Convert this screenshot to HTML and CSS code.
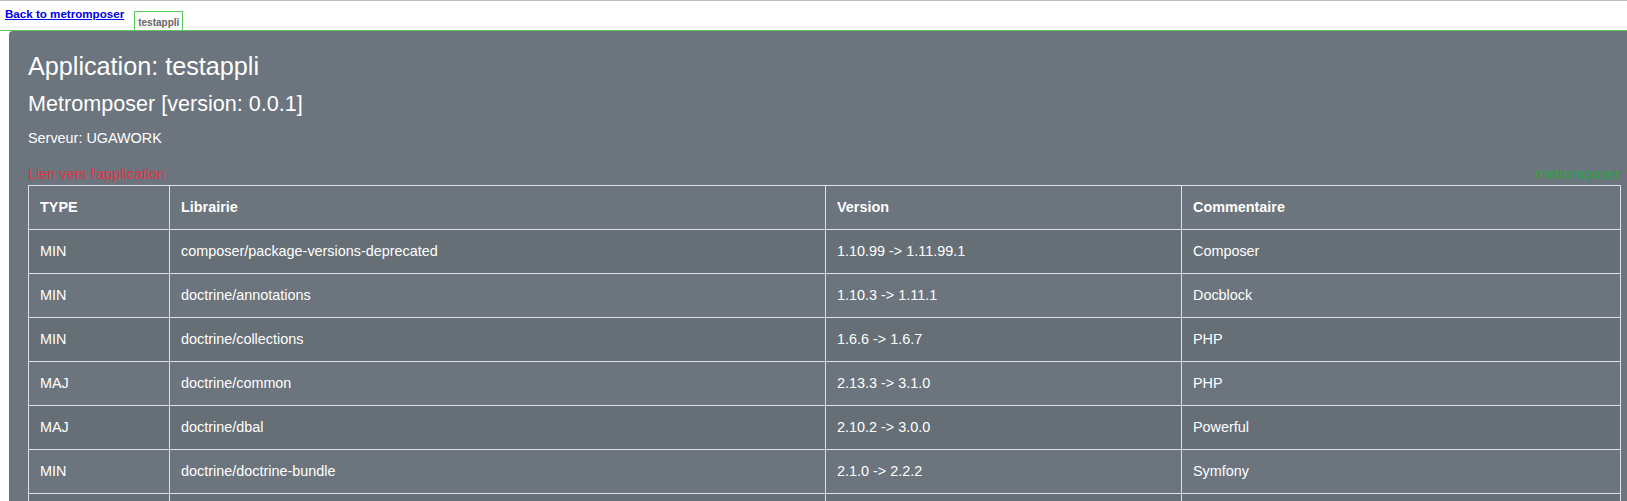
FILE: index.html
```html
<!DOCTYPE html>
<html lang="fr">
<head>
<meta charset="utf-8">
<title>testappli</title>
<link rel="stylesheet" href="styles.css">
</head>
<body>
<div class="topbar">
  <a class="back" href="#">Back to metromposer</a>
  <span class="tab">testappli</span>
</div>
<div class="panel">
  <h3 class="title">Application: testappli</h3>
  <h4 class="subtitle">Metromposer [version: 0.0.1]</h4>
  <p class="server">Serveur: UGAWORK</p>
  <div class="links">
    <a class="applink" href="#">Lien vers l'application</a>
    <a class="metrolink" href="#">metromposer</a>
  </div>
  <table class="libs">
    <colgroup>
      <col class="c1"><col class="c2"><col class="c3"><col class="c4">
    </colgroup>
    <thead>
      <tr><th>TYPE</th><th>Librairie</th><th>Version</th><th>Commentaire</th></tr>
    </thead>
    <tbody>
      <tr><td>MIN</td><td>composer/package-versions-deprecated</td><td>1.10.99 -&gt; 1.11.99.1</td><td>Composer</td></tr>
      <tr><td>MIN</td><td>doctrine/annotations</td><td>1.10.3 -&gt; 1.11.1</td><td>Docblock</td></tr>
      <tr><td>MIN</td><td>doctrine/collections</td><td>1.6.6 -&gt; 1.6.7</td><td>PHP</td></tr>
      <tr><td>MAJ</td><td>doctrine/common</td><td>2.13.3 -&gt; 3.1.0</td><td>PHP</td></tr>
      <tr><td>MAJ</td><td>doctrine/dbal</td><td>2.10.2 -&gt; 3.0.0</td><td>Powerful</td></tr>
      <tr><td>MIN</td><td>doctrine/doctrine-bundle</td><td>2.1.0 -&gt; 2.2.2</td><td>Symfony</td></tr>
      <tr><td>MIN</td><td>doctrine/doctrine-migrations-bundle</td><td>3.0.1 -&gt; 3.0.2</td><td>Symfony</td></tr>
    </tbody>
  </table>
</div>
</body>
</html>
```

FILE: styles.css
```css
html, body {
  margin: 0;
  padding: 0;
  background: #ffffff;
}

body {
  font-family: "Liberation Sans", Arial, sans-serif;
  font-size: 14.4px;
  line-height: 1.5;
  color: #212529;
  overflow: hidden;
}

.topbar {
  display: flex;
  align-items: flex-end;
  gap: 10px;
  height: 29px;
  padding-left: 5px;
  border-top: 1px solid #bdbdbd;
  border-bottom: 1px solid #5cc95c;
}

.back {
  align-self: flex-start;
  margin-top: 6px;
  font-size: 11.6px;
  font-weight: bold;
  line-height: 14px;
  color: #0000ee;
  text-decoration: underline;
}

.tab {
  height: 18px;
  padding: 0 3px;
  border: 1px solid #5cc95c;
  border-bottom: none;
  font-size: 10px;
  font-weight: bold;
  line-height: 22px;
  color: #666666;
  background: #ffffff;
}

.panel {
  margin-left: 9px;
  padding: 20px 7px 0 19px;
  background: #6c757d;
  border-top-left-radius: 4px;
  color: #ffffff;
  min-height: 480px;
}

.title {
  margin: 0 0 10px 0;
  font-size: 25.2px;
  font-weight: normal;
  line-height: 30px;
}

.subtitle {
  margin: 0 0 11px 0;
  font-size: 21.6px;
  font-weight: normal;
  line-height: 26px;
}

.server {
  margin: 0 0 15px 0;
  line-height: 21px;
}

.links {
  display: flex;
  justify-content: space-between;
  width: 1592px;
  line-height: 21px;
}

.applink {
  color: #dc3545;
  text-decoration: none;
}

.metrolink {
  color: #28a745;
  text-decoration: none;
}

.libs {
  width: 1592px;
  border-collapse: collapse;
  table-layout: fixed;
  color: #ffffff;
}

.c1 { width: 141px; }
.c2 { width: 656px; }
.c3 { width: 356px; }
.c4 { width: 439px; }

.libs th,
.libs td {
  padding: 12px 11px;
  border: 1px solid #dee2e6;
  text-align: left;
  line-height: 19px;
  vertical-align: top;
  white-space: nowrap;
}

.libs th {
  font-weight: bold;
}

.libs tbody tr:nth-child(odd) {
  background: rgba(0, 0, 0, 0.05);
}
```
